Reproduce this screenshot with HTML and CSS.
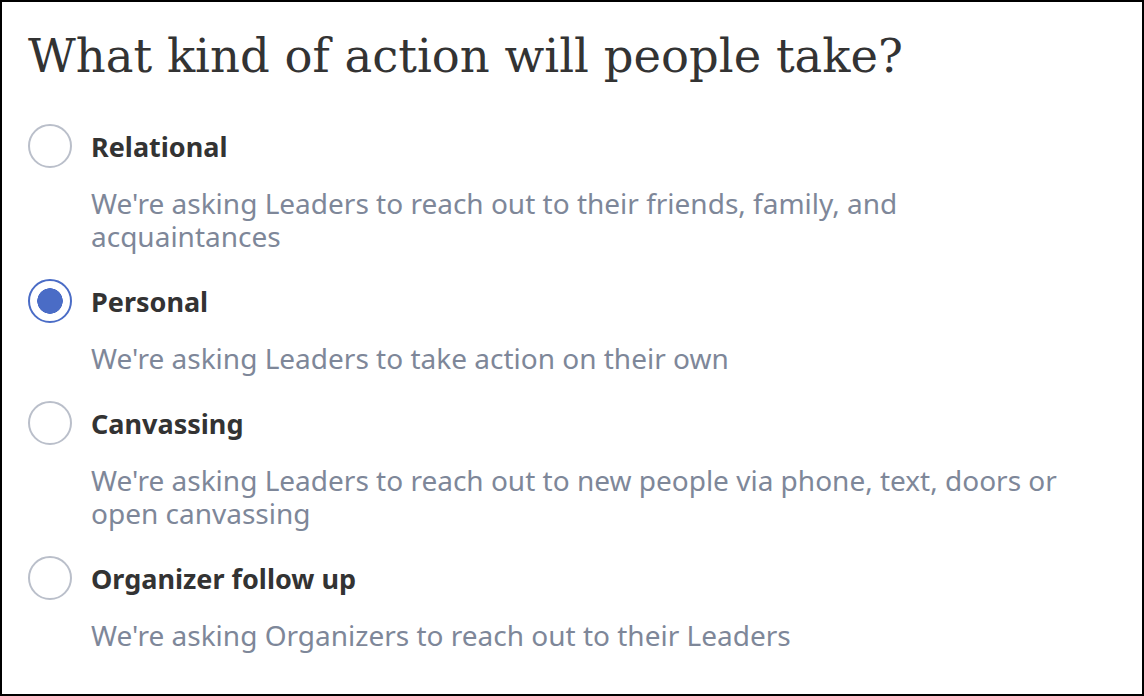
FILE: index.html
```html
<!DOCTYPE html>
<html lang="en">
<head>
  <meta charset="UTF-8">
  <meta name="viewport" content="width=device-width, initial-scale=1.0">
  <title>Action type</title>
  <link rel="stylesheet" href="styles.css">
</head>
<body>
  <form class="action-form">
    <h1>What kind of action will people take?</h1>

    <div class="options">
      <label class="option">
        <span class="option-row">
          <input type="radio" name="action" value="relational">
          <span class="option-title">Relational</span>
        </span>
        <span class="option-desc">We're asking Leaders to reach out to their friends, family, and acquaintances</span>
      </label>

      <label class="option">
        <span class="option-row">
          <input type="radio" name="action" value="personal" checked>
          <span class="option-title">Personal</span>
        </span>
        <span class="option-desc">We're asking Leaders to take action on their own</span>
      </label>

      <label class="option">
        <span class="option-row">
          <input type="radio" name="action" value="canvassing">
          <span class="option-title">Canvassing</span>
        </span>
        <span class="option-desc">We're asking Leaders to reach out to new people via phone, text, doors or open canvassing</span>
      </label>

      <label class="option">
        <span class="option-row">
          <input type="radio" name="action" value="organizer">
          <span class="option-title">Organizer follow up</span>
        </span>
        <span class="option-desc">We're asking Organizers to reach out to their Leaders</span>
      </label>
    </div>
  </form>
</body>
</html>
```

FILE: styles.css
```css
* {
  margin: 0;
  padding: 0;
  box-sizing: border-box;
}
body {
  font-family: 'Noto Sans', 'Open Sans', sans-serif;
  background-color: white;
  color: #333333;
  height: 100vh;
  border: 2px solid black;
  padding: 0 26px;
}
.action-form h1 {
  font-family: 'DejaVu Serif', 'Liberation Serif', serif;
  font-weight: normal;
  font-size: 46.5px;
  line-height: 56px;
  color: #333333;
  margin-top: 26px;
  margin-bottom: 40px;
}
.options {
  display: flex;
  flex-direction: column;
  gap: 26px;
}
.option {
  display: flex;
  flex-direction: column;
  cursor: pointer;
}
.option-row {
  display: flex;
  align-items: center;
  gap: 19px;
  height: 44px;
}
.option-row input {
  appearance: none;
  width: 44px;
  height: 44px;
  border-radius: 50%;
  border: 2px solid #babfca;
  background-color: white;
  flex-shrink: 0;
  cursor: pointer;
}
.option-row input:checked {
  border: 2px solid #4a6cc6;
  background-image: radial-gradient(circle, #4a6cc6 0, #4a6cc6 12.5px, white 13px);
}
.option-title {
  font-size: 27px;
  font-weight: bold;
  color: #333333;
}
.option-desc {
  max-width: 990px;
  margin-top: 19px;
  margin-left: 63px;
  font-size: 28px;
  line-height: 33px;
  color: #7e8799;
}
```
